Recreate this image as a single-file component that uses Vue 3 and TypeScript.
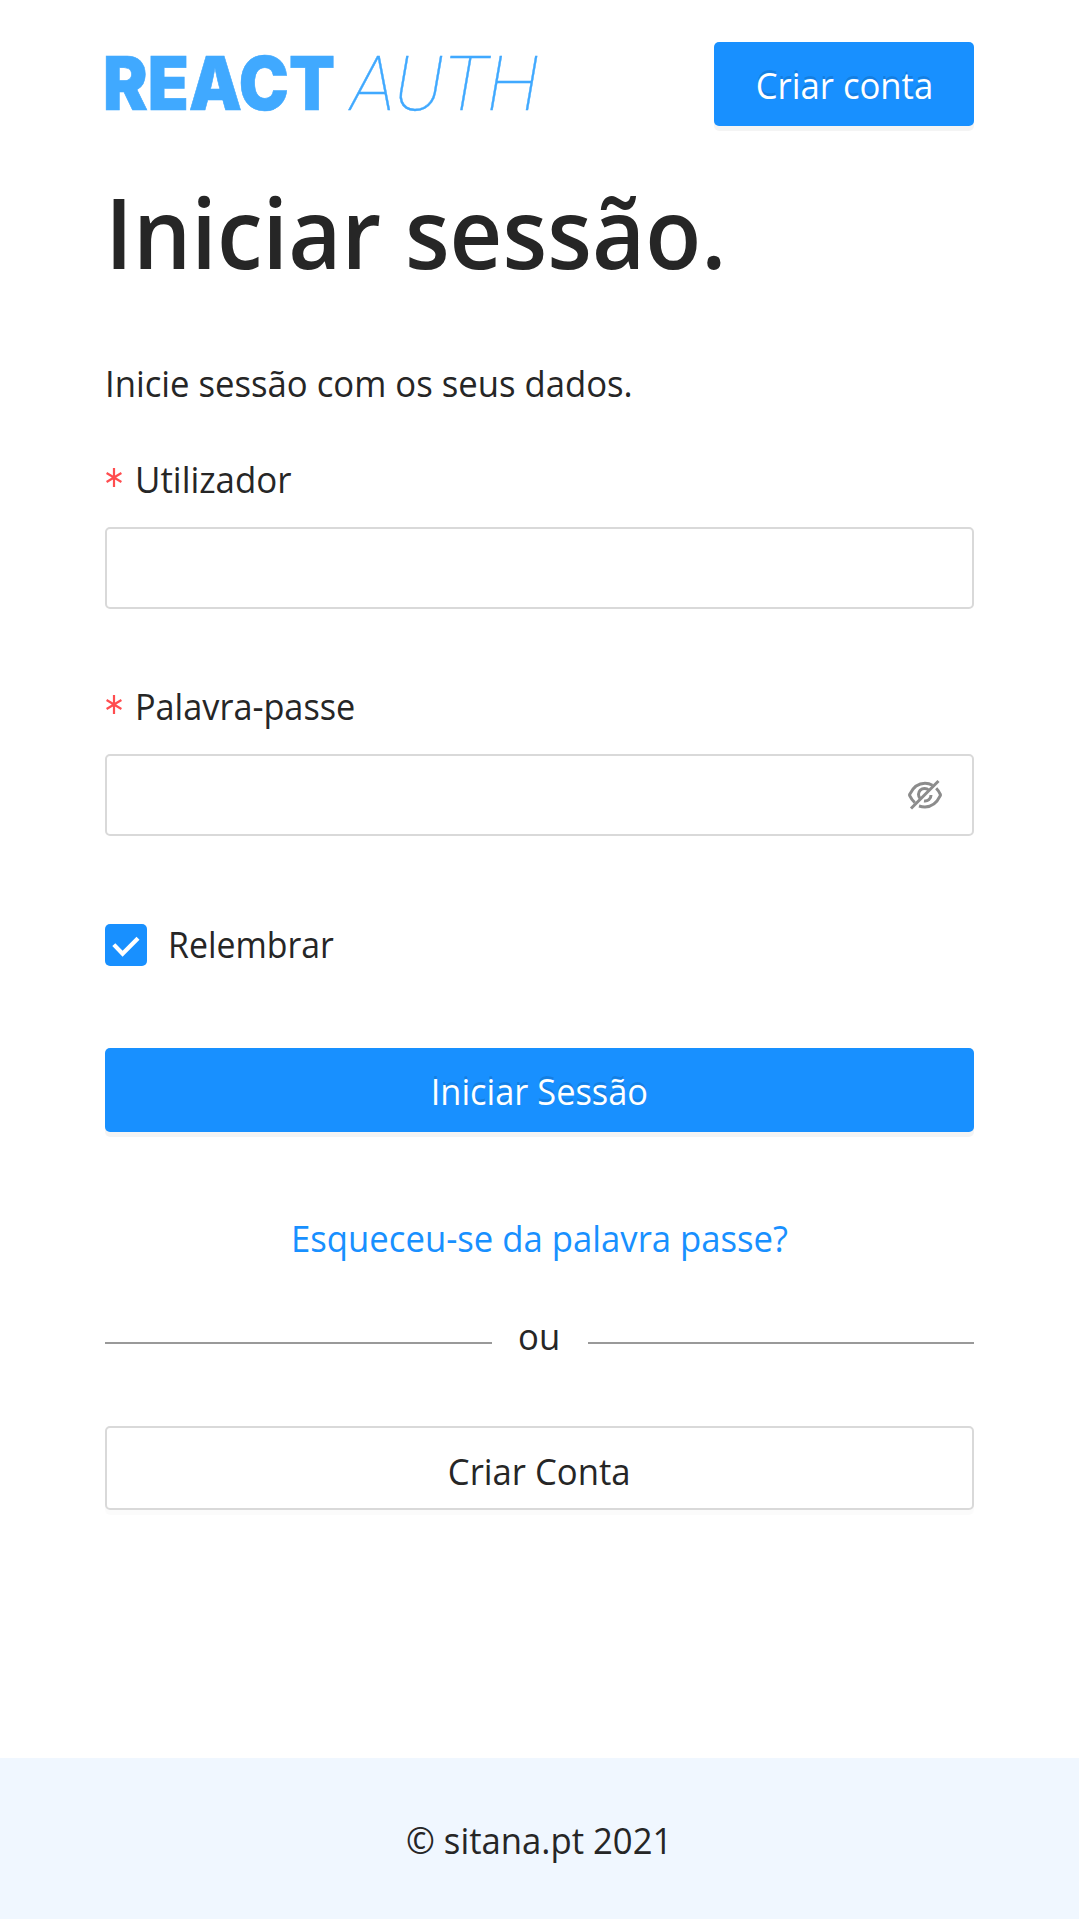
<script setup lang="ts">
import { ref } from 'vue'

const username = ref('')
const password = ref('')
const remember = ref(true)
</script>

<template>
  <div class="page">
    <header class="header">
      <svg class="logo" width="440" height="84" viewBox="0 0 440 84" role="img" aria-label="React Auth">
        <text class="logo-bold" x="-2" y="67.500" textLength="232" lengthAdjust="spacingAndGlyphs">REACT</text>
        <text class="logo-thin" x="246" y="68" textLength="188" lengthAdjust="spacingAndGlyphs">AUTH</text>
      </svg>
      <button class="btn primary small" type="button"><span class="narrow">Criar conta</span></button>
    </header>

    <main class="main">
      <h1 class="title"><span class="narrow left">Iniciar sessão.</span></h1>
      <p class="intro"><span class="narrow left">Inicie sessão com os seus dados.</span></p>

      <form @submit.prevent>
        <label class="label first" for="user">
          <svg class="star" width="16" height="19" viewBox="0 0 16 19"><path d="M8 0v19M0.6 5l14.8 9M15.4 5L0.6 14" /></svg>
          <span class="narrow left t-user">Utilizador</span>
        </label>
        <div class="field"><input id="user" v-model="username" type="text" /></div>

        <label class="label second" for="pass">
          <svg class="star" width="16" height="19" viewBox="0 0 16 19"><path d="M8 0v19M0.6 5l14.8 9M15.4 5L0.6 14" /></svg>
          <span class="narrow left t-pass">Palavra-passe</span>
        </label>
        <div class="field">
          <input id="pass" v-model="password" type="password" />
          <svg class="eye" width="36" height="32" viewBox="0 0 36 32">
            <path d="M25.5 6.2C23.300 5 20.800 4.300 18 4.300C11 4.300 6 8.500 2.700 15.300Q2.300 16 2.700 16.700C4 19.500 5.700 21.800 7.800 23.600M12 27C13.800 27.600 15.800 28 18 28C25 28 30 23.500 33.300 16.700Q33.700 16 33.300 15.300C32.200 13 30.900 11 29.200 9.300" />
            <path d="M21.800 11.200A6 6 0 0 0 13.200 19.600M24 16A6 6 0 0 1 17 22" />
            <path d="M31.500 2L4 29.500" />
          </svg>
        </div>

        <label class="remember">
          <input v-model="remember" class="native" type="checkbox" />
          <span class="box">
            <svg v-if="remember" width="42" height="42" viewBox="0 0 42 42"><path d="M8.800 20.600L17.600 29.800L33 14.300" /></svg>
          </span>
          <span class="narrow left t-remember">Relembrar</span>
        </label>

        <button class="btn primary block" type="submit"><span class="narrow t-login">Iniciar Sessão</span></button>
      </form>

      <a class="forgot"><span class="narrow">Esqueceu-se da palavra passe?</span></a>
      <div class="divider"><span class="narrow">ou</span></div>
      <button class="btn outline block" type="button"><span class="narrow">Criar Conta</span></button>
    </main>

    <footer class="footer"><span class="narrow">© sitana.pt 2021</span></footer>
  </div>
</template>

<style>
body {
  background: #fff;
}
</style>

<style scoped>
.page {
  box-sizing: border-box;
  min-height: 1919px;
  display: flex;
  flex-direction: column;
  font-family: 'Open Sans', 'Noto Sans', sans-serif;
  font-size: 36.5px;
  line-height: 58px;
  color: #262626;
}
/* The text face is condensed slightly on the horizontal axis. */
.narrow {
  display: inline-block;
  transform: scaleX(0.95);
}
.left {
  transform-origin: left center;
}
.title .narrow {
  transform: scaleX(0.937);
}
.t-user {
  transform: scaleX(0.955);
}
.t-pass {
  transform: scaleX(0.938);
}
.t-remember {
  transform: scaleX(0.927);
}
.t-login {
  transform: scaleX(0.942);
}
.header {
  display: flex;
  justify-content: space-between;
  padding: 42px 105px 0 105px;
}
.logo {
  overflow: visible;
}
.logo text {
  fill: #40a9ff;
}
.logo-bold {
  font: 900 74px Inter, sans-serif;
  stroke: #40a9ff;
  stroke-width: 0.6;
}
.logo-thin {
  font: italic 100 76px Roboto, sans-serif;
  stroke: #40a9ff;
  stroke-width: 0.4;
}
.btn {
  box-sizing: border-box;
  height: 84px;
  display: flex;
  align-items: center;
  justify-content: center;
  padding: 2px 0 0;
  border: 0;
  border-radius: 5px;
  font: inherit;
  white-space: nowrap;
}
.primary {
  color: #fff;
  background: #1890ff;
  text-shadow: 0 -3px 0 rgba(0, 0, 0, 0.12);
  box-shadow: 0 5px 0 rgba(0, 0, 0, 0.045);
}
.small {
  width: 260px;
}
.block {
  width: 100%;
}
.main {
  flex: 1;
  padding: 45px 105px 0 105px;
}
.title {
  margin: 0;
  font-size: 98px;
  line-height: 120px;
  font-weight: 600;
  white-space: nowrap;
}
.intro {
  margin: 63px 0 0;
  white-space: nowrap;
}
.label {
  display: flex;
  align-items: center;
}
.first {
  margin-top: 38px;
}
.second {
  margin-top: 68.500px;
}
.star {
  margin: 0 13px 3px 1px;
  fill: none;
  stroke: #ff4d4f;
  stroke-width: 2.200;
}
.field {
  box-sizing: border-box;
  height: 81.500px;
  margin-top: 19px;
  display: flex;
  align-items: center;
  border: 2px solid #d9d9d9;
  border-radius: 5px;
}
.field input {
  flex: 1;
  min-width: 0;
  height: 100%;
  box-sizing: border-box;
  padding: 0 28px;
  border: 0;
  outline: 0;
  background: transparent;
  font: inherit;
}
.eye {
  margin-right: 29px;
  fill: none;
  stroke: #8c8c8c;
  stroke-width: 3;
}
.remember {
  margin: 79.500px 0 75px;
  display: flex;
  align-items: center;
}
.native {
  position: absolute;
  opacity: 0;
}
.box {
  width: 42px;
  height: 42px;
  margin: 2px 21px 0 0;
  border-radius: 5px;
  background: #1890ff;
}
.box svg {
  display: block;
  fill: none;
  stroke: #fff;
  stroke-width: 4.200;
}
.forgot {
  display: block;
  margin-top: 77px;
  text-align: center;
  color: #1890ff;
}
.divider {
  margin: 40px 0 60.500px;
  display: flex;
  align-items: center;
  justify-content: space-between;
}
.divider::before,
.divider::after {
  content: '';
  width: 386.500px;
  height: 2px;
  margin-top: 14px;
  background: #999;
}
.outline {
  padding-top: 6px;
  border: 2px solid #d9d9d9;
  background: #fff;
  color: #262626;
  box-shadow: 0 5px 0 rgba(0, 0, 0, 0.016);
}
.footer {
  box-sizing: border-box;
  height: 161.500px;
  padding-top: 4px;
  display: flex;
  align-items: center;
  justify-content: center;
  background: #f0f7ff;
}
</style>
